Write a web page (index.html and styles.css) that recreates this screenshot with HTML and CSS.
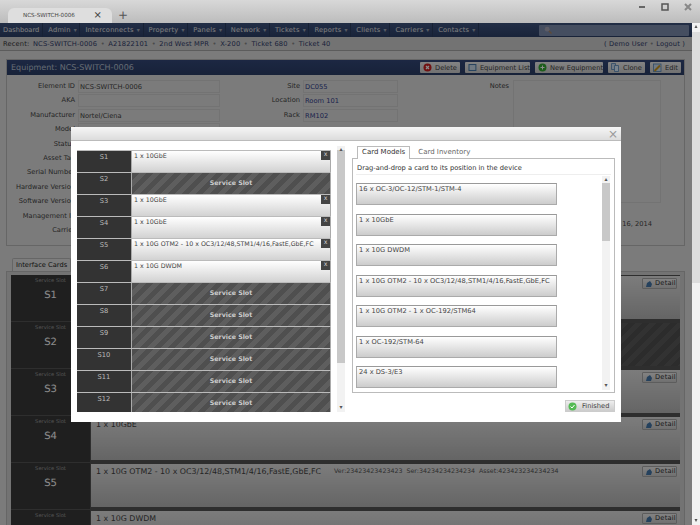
FILE: index.html
```html
<!DOCTYPE html>
<html lang="en">

<head>
  <meta charset="UTF-8">
  <title>NCS-SWITCH-0006</title>
  <link rel="stylesheet" href="styles.css">
</head>

<body>

  <div class="browser">
    <div class="browser__tab">
      <span class="browser__tab-title">NCS-SWITCH-0006</span>
      <span class="browser__tab-close">×</span>
    </div>
    <span class="browser__new">+</span>
    <div class="browser__controls">
      <svg width="8" height="8" viewBox="0 0 8 8"><rect x="1" y="3" width="6" height="2" fill="#666"/></svg>
      <svg width="8" height="8" viewBox="0 0 8 8"><rect x="1" y="1" width="6" height="6" fill="none" stroke="#555" stroke-width="1.5"/></svg>
      <svg width="8" height="8" viewBox="0 0 8 8"><path d="M1 1l6 6M7 1l-6 6" stroke="#888" stroke-width="2"/></svg>
    </div>
  </div>

  <div class="viewport">
    <div class="page">
      <nav class="menu">
        <a class="menu__link menu__link_home">Dashboard</a>
        <a class="menu__link">Admin <i>▾</i></a>
        <a class="menu__link">Interconnects <i>▾</i></a>
        <a class="menu__link">Property <i>▾</i></a>
        <a class="menu__link">Panels <i>▾</i></a>
        <a class="menu__link">Network <i>▾</i></a>
        <a class="menu__link">Tickets <i>▾</i></a>
        <a class="menu__link">Reports <i>▾</i></a>
        <a class="menu__link">Clients <i>▾</i></a>
        <a class="menu__link">Carriers <i>▾</i></a>
        <a class="menu__link">Contacts <i>▾</i></a>
        <div class="menu__search">
          <svg width="8" height="8" viewBox="0 0 8 8"><circle cx="3.2" cy="3.2" r="2.4" fill="#aab"/><path d="M5 5l2.5 2.5" stroke="#a86" stroke-width="1.4"/></svg>
        </div>
      </nav>

      <div class="recent">
        <span class="recent__title">Recent:</span>
        <a>NCS-SWITCH-0006</a><i>•</i>
        <a>A21822101</a><i>•</i>
        <a>2nd West MPR</a><i>•</i>
        <a>X-200</a><i>•</i>
        <a>Ticket 680</a><i>•</i>
        <a>Ticket 40</a>
        <span class="recent__user">( Demo User <i>•</i> Logout )</span>
      </div>

      <section class="equip">
        <header class="equip__head">
          <h1 class="equip__title">Equipment: NCS-SWITCH-0006</h1>
          <button class="btn btn_delete">
            <svg width="9" height="9" viewBox="0 0 9 9"><circle cx="4.5" cy="4.5" r="4" fill="#c22"/><path d="M3 3l3 3M6 3l-3 3" stroke="#fff" stroke-width="1.2"/></svg>
            Delete
          </button>
          <button class="btn btn_list">
            <svg width="9" height="9" viewBox="0 0 9 9"><rect x="1" y="1.5" width="7" height="6" fill="#cde" stroke="#47a"/></svg>
            Equipment List
          </button>
          <button class="btn btn_new">
            <svg width="9" height="9" viewBox="0 0 9 9"><circle cx="4.5" cy="4.5" r="4" fill="#3a3"/><path d="M2.5 4.5h4M4.5 2.5v4" stroke="#fff"/></svg>
            New Equipment
          </button>
          <button class="btn btn_clone">
            <svg width="9" height="9" viewBox="0 0 9 9"><path d="M.5.5h4v6h-4z" fill="#cde" stroke="#58b" stroke-width=".8"/><path d="M3.5 2.5h4v6h-4z" fill="#def" stroke="#58b" stroke-width=".8"/></svg>
            Clone
          </button>
          <button class="btn btn_edit">
            <svg width="9" height="9" viewBox="0 0 9 9"><rect x=".5" y="1" width="7.5" height="7.5" fill="#cde" stroke="#58b" stroke-width=".8"/><path d="M1.5 8L7 2.5" stroke="#c92" stroke-width="2"/></svg>
            Edit
          </button>
        </header>
        <div class="equip__body">
          <div class="fields">
            <div class="field"><label class="field__label">Element ID</label><span class="field__value">NCS-SWITCH-0006</span></div>
            <div class="field"><label class="field__label">AKA</label><span class="field__value"></span></div>
            <div class="field"><label class="field__label">Manufacturer</label><span class="field__value">Nortel/Ciena</span></div>
            <div class="field"><label class="field__label">Model</label><span class="field__value"></span></div>
            <div class="field"><label class="field__label">Status</label><span class="field__value"></span></div>
            <div class="field"><label class="field__label">Asset Tag</label><span class="field__value"></span></div>
            <div class="field"><label class="field__label">Serial Number</label><span class="field__value"></span></div>
            <div class="field"><label class="field__label">Hardware Version</label><span class="field__value"></span></div>
            <div class="field"><label class="field__label">Software Version</label><span class="field__value"></span></div>
            <div class="field"><label class="field__label">Management IP</label><span class="field__value"></span></div>
            <div class="field"><label class="field__label">Carrier</label><span class="field__value"></span></div>
          </div>
          <div class="fields fields_site">
            <div class="field"><label class="field__label">Site</label><span class="field__value field__value_link">DC055</span></div>
            <div class="field"><label class="field__label">Location</label><span class="field__value field__value_link">Room 101</span></div>
            <div class="field"><label class="field__label">Rack</label><span class="field__value field__value_link">RM102</span></div>
          </div>
          <div class="notes">
            <label class="notes__label">Notes</label>
            <div class="notes__box"></div>
          </div>
          <span class="equip__date">16, 2014</span>
        </div>
      </section>

      <div class="cards-tab">Interface Cards</div>
      <section class="cards">
        <div class="card-row">
          <div class="slot"><small>Service Slot</small><b>S1</b></div>
          <div class="card"><a class="detail"><svg width="8" height="8" viewBox="0 0 8 8"><path d="M1 7l1-4 3-2 2 3-1 3z" fill="#47a"/></svg>Detail</a></div>
        </div>
        <div class="card-row">
          <div class="slot"><small>Service Slot</small><b>S2</b></div>
          <div class="card card_service"></div>
        </div>
        <div class="card-row">
          <div class="slot"><small>Service Slot</small><b>S3</b></div>
          <div class="card"><a class="detail"><svg width="8" height="8" viewBox="0 0 8 8"><path d="M1 7l1-4 3-2 2 3-1 3z" fill="#47a"/></svg>Detail</a></div>
        </div>
        <div class="card-row">
          <div class="slot"><small>Service Slot</small><b>S4</b></div>
          <div class="card"><span>1 x 10GbE</span><a class="detail"><svg width="8" height="8" viewBox="0 0 8 8"><path d="M1 7l1-4 3-2 2 3-1 3z" fill="#47a"/></svg>Detail</a></div>
        </div>
        <div class="card-row">
          <div class="slot"><small>Service Slot</small><b>S5</b></div>
          <div class="card"><span>1 x 10G OTM2 - 10 x OC3/12/48,STM1/4/16,FastE,GbE,FC</span><span class="card__meta">Ver:23423423423423 &nbsp;Ser:34234234234234 &nbsp;Asset:423423234234234</span><a class="detail"><svg width="8" height="8" viewBox="0 0 8 8"><path d="M1 7l1-4 3-2 2 3-1 3z" fill="#47a"/></svg>Detail</a></div>
        </div>
        <div class="card-row">
          <div class="slot"><small>Service Slot</small></div>
          <div class="card"><span>1 x 10G DWDM</span><a class="detail"><svg width="8" height="8" viewBox="0 0 8 8"><path d="M1 7l1-4 3-2 2 3-1 3z" fill="#47a"/></svg>Detail</a></div>
        </div>
      </section>
    </div>

    <div class="scroll scroll_page">
      <span class="scroll__arrow">▴</span>
      <span class="scroll__arrow scroll__arrow_down">▾</span>
    </div>

    <div class="overlay"></div>
  </div>

  <div class="modal">
    <div class="modal__bar"><span class="modal__close">×</span></div>
    <div class="modal__body">
      <div class="device">
        <div class="device__list">
          <div class="dev-row"><div class="dev-row__name">S1</div><div class="dev-card">1 x 10GbE<span class="dev-card__x">x</span></div></div>
          <div class="dev-row"><div class="dev-row__name">S2</div><div class="dev-service">Service Slot</div></div>
          <div class="dev-row"><div class="dev-row__name">S3</div><div class="dev-card">1 x 10GbE<span class="dev-card__x">x</span></div></div>
          <div class="dev-row"><div class="dev-row__name">S4</div><div class="dev-card">1 x 10GbE<span class="dev-card__x">x</span></div></div>
          <div class="dev-row"><div class="dev-row__name">S5</div><div class="dev-card">1 x 10G OTM2 - 10 x OC3/12/48,STM1/4/16,FastE,GbE,FC<span class="dev-card__x">x</span></div></div>
          <div class="dev-row"><div class="dev-row__name">S6</div><div class="dev-card">1 x 10G DWDM<span class="dev-card__x">x</span></div></div>
          <div class="dev-row"><div class="dev-row__name">S7</div><div class="dev-service">Service Slot</div></div>
          <div class="dev-row"><div class="dev-row__name">S8</div><div class="dev-service">Service Slot</div></div>
          <div class="dev-row"><div class="dev-row__name">S9</div><div class="dev-service">Service Slot</div></div>
          <div class="dev-row"><div class="dev-row__name">S10</div><div class="dev-service">Service Slot</div></div>
          <div class="dev-row"><div class="dev-row__name">S11</div><div class="dev-service">Service Slot</div></div>
          <div class="dev-row"><div class="dev-row__name">S12</div><div class="dev-service">Service Slot</div></div>
        </div>
        <div class="scroll scroll_device">
          <span class="scroll__arrow">▴</span>
          <span class="scroll__arrow scroll__arrow_down">▾</span>
        </div>
      </div>

      <div class="picker">
        <div class="tabs">
          <a class="tabs__item tabs__item_active">Card Models</a>
          <a class="tabs__item">Card Inventory</a>
        </div>
        <div class="picker__panel">
          <p class="picker__hint">Drag-and-drop a card to its position in the device</p>
          <div class="picker__models">
            <div class="picker__list">
              <div class="model">16 x OC-3/OC-12/STM-1/STM-4</div>
              <div class="model">1 x 10GbE</div>
              <div class="model">1 x 10G DWDM</div>
              <div class="model">1 x 10G OTM2 - 10 x OC3/12/48,STM1/4/16,FastE,GbE,FC</div>
              <div class="model">1 x 10G OTM2 - 1 x OC-192/STM64</div>
              <div class="model">1 x OC-192/STM-64</div>
              <div class="model">24 x DS-3/E3</div>
            </div>
            <div class="scroll scroll_models">
              <span class="scroll__arrow">▴</span>
              <span class="scroll__arrow scroll__arrow_down">▾</span>
            </div>
          </div>
        </div>
        <div class="picker__foot">
          <button class="finish">
            <svg width="9" height="9" viewBox="0 0 9 9"><circle cx="4.5" cy="4.5" r="4" fill="#5b5"/><path d="M2.5 4.5l1.5 1.5 2.5-3" stroke="#fff" fill="none"/></svg>
            Finished
          </button>
        </div>
      </div>
    </div>
  </div>

</body>
</html>
```

FILE: styles.css
```css
* {
  box-sizing: border-box;
}

html,
body {
  margin: 0;
  height: 525px;
  overflow: hidden;
}

body {
  position: relative;
  font-family: "DejaVu Sans", sans-serif;
  font-size: 6.7px;
  color: #444;
  background-color: #ccc;
  text-rendering: geometricPrecision;
  filter: blur(0.3px);
}

button {
  font-family: inherit;
  text-rendering: inherit;
  white-space: nowrap;
}

i {
  font-style: normal;
}

/* browser frame */

.browser {
  height: 23px;
  display: flex;
  align-items: flex-end;
  padding-left: 8px;
  background: linear-gradient(#d8d8d8, #bcbcbc);
}

.browser__tab {
  width: 104px;
  height: 15px;
  display: flex;
  align-items: center;
  justify-content: space-between;
  padding: 0 10px 0 15px;
  background-color: #dedede;
  border-radius: 6px 6px 0 0;
  color: #444;
  font-size: 5.6px;
}

.browser__tab-close {
  font-size: 10px;
}

.browser__new {
  margin: 0 0 2px 6px;
  font-size: 12px;
  line-height: 12px;
  color: #555;
}

.browser__controls {
  margin: 0 0 12px auto;
  padding-right: 8px;
  display: flex;
  gap: 15px;
}

/* page under the dialog */

.viewport {
  position: relative;
  height: 502px;
  display: flex;
  overflow: hidden;
}

.page {
  width: 692px;
  height: 502px;
  overflow: hidden;
  background-color: #e1e1e1;
}

.overlay {
  position: absolute;
  top: 0;
  left: 0;
  width: 692px;
  height: 100%;
  background-color: rgba(0, 0, 0, 0.45);
}

.menu {
  height: 14px;
  display: flex;
  align-items: center;
  background: linear-gradient(#3f5580, #2d4068);
  color: #e8e8e8;
}

.menu__link {
  height: 100%;
  display: flex;
  align-items: center;
  gap: 3px;
  padding: 0 2.8px 0 5px;
  border-right: 1px solid #2a3c60;
  letter-spacing: 0.2px;
}

.menu__link_home {
  padding: 0 3px 0 3px;
  letter-spacing: 0;
}

.menu__link i {
  font-size: 6px;
  letter-spacing: 0;
  opacity: 0.6;
}

.menu__search {
  width: 150px;
  height: 11px;
  margin-left: auto;
  margin-right: 3px;
  padding: 1px 0 0 5px;
  background-color: #7f8fb0;
  border-radius: 1px;
}

.recent {
  height: 14px;
  display: flex;
  align-items: center;
  gap: 3.5px;
  padding: 0 7px 0 3px;
  background-color: #d2d2d2;
  border-bottom: 1px solid #a8a8a8;
  color: #2f3a6a;
  letter-spacing: 0.15px;
}

.recent i {
  color: #888;
}

.recent__title {
  color: #333;
}

.recent__user {
  margin-left: auto;
}

.equip {
  margin: 8px 7px 0 6px;
  border: 1px solid #bbb;
  height: 187px;
}

.equip__head {
  height: 15px;
  display: flex;
  align-items: center;
  gap: 5px;
  padding: 0 3px 0 4px;
  background: linear-gradient(#34487a, #2c3f68);
}

.equip__title {
  margin: 0 auto 0 0;
  font-size: 8px;
  font-weight: normal;
  color: #b8c2d2;
}

.btn {
  height: 11px;
  display: flex;
  align-items: center;
  gap: 3px;
  padding: 0 0 0 3px;
  font-size: 6.7px;
  color: #444;
  background: linear-gradient(#f0f0f0, #cfcfcf);
  border: 0;
  border-radius: 1px;
}

.btn_delete {
  width: 40px;
}

.btn_list {
  width: 65px;
}

.btn_new {
  width: 68px;
}

.btn_clone {
  width: 37px;
}

.btn_edit {
  width: 31px;
}

.equip__body {
  position: relative;
  display: flex;
  padding-top: 5px;
}

.fields {
  width: 213px;
}

.fields_site {
  width: 178px;
  margin-left: 0;
}

.field {
  height: 14.4px;
  display: flex;
  gap: 3px;
}

.field__label {
  flex: none;
  width: 68px;
  text-align: right;
  line-height: 12px;
  white-space: nowrap;
}

.fields_site .field__label {
  width: 80px;
}

.field__value {
  flex: 1;
  height: 13px;
  padding-left: 1px;
  line-height: 12px;
  border: 1px solid #d2d2d2;
}

.field__value_link {
  color: #2f3a8a;
}

.notes {
  display: flex;
  gap: 4px;
}

.notes__label {
  width: 111px;
  text-align: right;
  line-height: 12px;
}

.notes__box {
  width: 148px;
  height: 123px;
  border: 1px solid #d2d2d2;
}

.equip__date {
  position: absolute;
  top: 145px;
  right: 32px;
}

.cards-tab {
  width: 59px;
  height: 13px;
  margin: 12px 0 0 12px;
  padding-left: 3px;
  line-height: 12px;
  font-size: 6.7px;
  color: #222;
  background-color: #e4e4e4;
  border: 1px solid #bbb;
  border-bottom: 0;
  border-radius: 2px 2px 0 0;
  white-space: nowrap;
}

.cards {
  margin: 0 7px 0 6px;
  padding: 3px 4px 0 4px;
  border: 1px solid #bbb;
  background-color: #d2d2d2;
}

.card-row {
  height: 47px;
  display: flex;
  gap: 1px;
  background-color: #555;
}

.slot {
  flex: none;
  width: 79px;
  display: flex;
  flex-direction: column;
  align-items: center;
  margin-bottom: 1px;
  padding-top: 3px;
  background-color: #3a3a3a;
}

.slot small {
  font-size: 5.2px;
  color: #999;
}

.slot b {
  margin-top: 6px;
  font-size: 10px;
  font-weight: normal;
  color: #fff;
}

.card {
  flex: 1;
  display: flex;
  gap: 13px;
  height: 43px;
  margin-top: 1px;
  padding: 2px 3px 2px 5px;
  font-size: 7.9px;
  line-height: 11px;
  color: #444;
  background: linear-gradient(#e2e2e2, #b8b8b8);
}

.card_service {
  background: repeating-linear-gradient(135deg, #505050 0 5px, #5c5c5c 5px 10px);
}

.card__meta {
  font-size: 6.3px;
  color: #555;
}

.detail {
  flex: none;
  width: 35px;
  height: 11px;
  display: flex;
  align-items: center;
  gap: 2px;
  margin-left: auto;
  padding: 0 0 0 2px;
  font-size: 6.7px;
  letter-spacing: 0.2px;
  color: #333;
  background: linear-gradient(#eee, #ccc);
  border: 1px solid #aaa;
  border-radius: 1px;
}

/* scrollbars */

.scroll {
  position: relative;
  flex: none;
  width: 8px;
  background-color: #f2f2f2;
}

.scroll::before {
  content: '';
  position: absolute;
  left: 0;
  width: 100%;
  background-color: #c8c8c8;
}

.scroll_page::before {
  top: 9px;
  height: 251px;
  background-color: #ddd;
}

.scroll_device::before {
  top: 4px;
  height: 213px;
}

.scroll_models::before {
  top: 7px;
  height: 58px;
}

.scroll__arrow {
  position: absolute;
  top: 0;
  left: 0;
  width: 100%;
  text-align: center;
  font-size: 6px;
  line-height: 8px;
  color: #555;
}

.scroll__arrow_down {
  top: auto;
  bottom: 0;
}

/* dialog */

.modal {
  position: absolute;
  top: 127px;
  left: 71px;
  width: 550px;
  height: 295px;
  background-color: #fff;
}

.modal__bar {
  height: 14px;
  display: flex;
  justify-content: flex-end;
  align-items: center;
  padding-right: 3px;
  background: linear-gradient(#f6f6f6, #dcdcdc);
  border-bottom: 1px solid #bbb;
}

.modal__close {
  font-size: 12px;
  color: #999;
}

.modal__body {
  display: flex;
  padding: 5px 6px 0 6px;
}

.device {
  display: flex;
  gap: 6px;
  width: 268px;
  height: 266px;
}

.device__list {
  width: 255px;
  height: 266px;
  padding-top: 4px;
  overflow: hidden;
}

.scroll_device {
  height: 266px;
}

.dev-row {
  height: 22px;
  display: flex;
  gap: 1px;
  background-color: #aaa;
  border-top: 1px solid #bbb;
}

.dev-row__name {
  flex: none;
  width: 54px;
  padding-top: 2px;
  text-align: center;
  color: #bbb;
  background-color: #333;
}

.dev-card {
  position: relative;
  flex: 1;
  padding: 1px 0 0 2px;
  font-size: 6.3px;
  line-height: 10px;
  color: #444;
  background: linear-gradient(#fff, #d2d2d2);
  border-right: 1px solid #aaa;
  white-space: nowrap;
}

.dev-card__x {
  position: absolute;
  top: 0;
  right: 0;
  width: 9px;
  height: 9px;
  line-height: 8px;
  text-align: center;
  color: #ccc;
  background-color: #444;
}

.dev-service {
  flex: 1;
  padding-top: 7px;
  text-align: center;
  font-weight: bold;
  font-size: 6.3px;
  color: #ccc;
  background: repeating-linear-gradient(135deg, #4f4f4f 0 5px, #5e5e5e 5px 10px);
  border-right: 1px solid #aaa;
}

.picker {
  width: 263px;
  margin-left: 7px;
}

.tabs {
  height: 12px;
  display: flex;
  gap: 4px;
  padding-left: 5px;
}

.tabs__item {
  padding: 0 4px;
  font-size: 7px;
  line-height: 12px;
  color: #666;
}

.tabs__item_active {
  position: relative;
  height: 13px;
  color: #333;
  background-color: #fff;
  border: 1px solid #bbb;
  border-bottom: 0;
  line-height: 11px;
}

.picker__panel {
  height: 235px;
  padding: 0 3px;
  border: 1px solid #bbb;
}

.picker__hint {
  margin: 0;
  height: 16px;
  padding: 4px 0 0 1px;
  line-height: 10px;
  color: #333;
  border-bottom: 1px solid #eee;
}

.picker__models {
  display: flex;
  justify-content: space-between;
  height: 216px;
  padding: 1px 1px 1px 0;
  overflow: hidden;
}

.picker__list {
  display: flex;
  flex-direction: column;
  gap: 8.5px;
  width: 201px;
  padding-top: 7px;
}

.model {
  flex: none;
  height: 22px;
  padding: 0 0 0 2px;
  line-height: 10px;
  color: #444;
  background: linear-gradient(#fff, #ccc);
  border: 1px solid #aaa;
  border-top-color: #999;
  white-space: nowrap;
}

.scroll_models {
  height: 214px;
}

.picker__foot {
  display: flex;
  justify-content: flex-end;
  padding-top: 7px;
}

.finish {
  width: 50px;
  height: 12px;
  display: flex;
  align-items: center;
  gap: 5px;
  padding: 0 0 0 2px;
  font-size: 6.7px;
  color: #444;
  background: linear-gradient(#eee, #ccc);
  border: 1px solid #ccc;
}
```
